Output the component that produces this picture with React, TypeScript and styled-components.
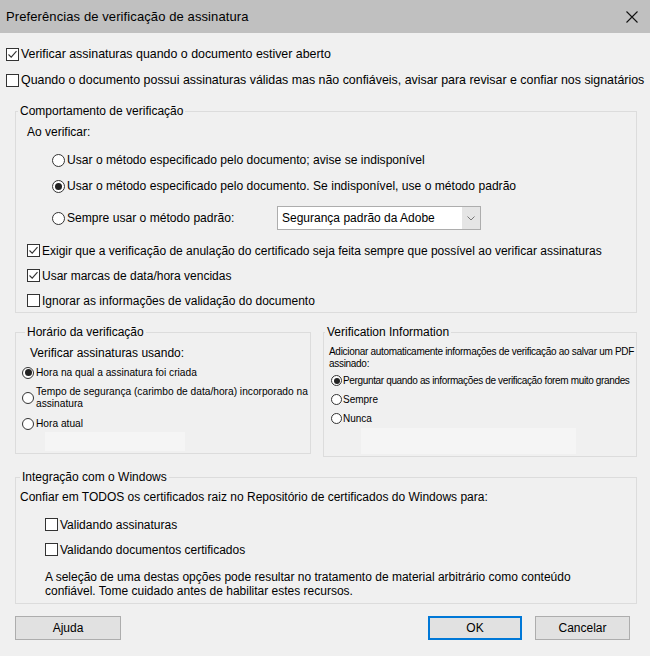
import React from "react";
import styled, { createGlobalStyle } from "styled-components";

const Global = createGlobalStyle`
  html, body { margin: 0; padding: 0; background: #f0f0f0; }
  body { font-family: "Liberation Sans", Arial, sans-serif; font-size: 12px; color: #000; }
  * { box-sizing: border-box; }
`;

const Window = styled.div`
  width: 650px;
  height: 656px;
  background: #f0f0f0;
  display: flex;
  flex-direction: column;
  overflow: hidden;
`;

const TitleBar = styled.div`
  height: 33px;
  flex: none;
  background: #c0c0c0;
  display: flex;
  align-items: center;
  justify-content: space-between;
  padding: 0 12px 0 6px;
`;

const Title = styled.div`
  font-size: 13px;
  letter-spacing: 0.1px;
`;

const CloseButton = styled.button`
  background: none;
  border: 0;
  padding: 0;
  width: 12px;
  height: 12px;
  display: flex;
`;

const TopOptions = styled.div`
  padding: 8px 0 0 6px;
  display: flex;
  flex-direction: column;
  flex: none;
`;

const Row = styled.label<{ $h?: number; $indent?: number; $mt?: number; $gap?: number }>`
  display: flex;
  align-items: center;
  gap: ${(p) => p.$gap ?? 2}px;
  height: ${(p) => p.$h ?? 26}px;
  margin-left: ${(p) => p.$indent ?? 0}px;
  margin-top: ${(p) => p.$mt ?? 0}px;
  white-space: nowrap;
  flex: none;
`;

const Text = styled.span<{ $size?: number; $lh?: number; $ls?: number }>`
  font-size: ${(p) => p.$size ?? 12}px;
  line-height: ${(p) => p.$lh ?? 14}px;
  letter-spacing: ${(p) => p.$ls ?? 0}px;
`;

const Box = styled.span`
  width: 13px;
  height: 13px;
  flex: none;
  border: 1px solid #333;
  background: #fff;
  display: flex;
  align-items: center;
  justify-content: center;
`;

const Circle = styled.span<{ $size: number }>`
  width: ${(p) => p.$size}px;
  height: ${(p) => p.$size}px;
  flex: none;
  border: 1px solid #333;
  border-radius: 50%;
  background: #fff;
  display: flex;
  align-items: center;
  justify-content: center;
`;

const Dot = styled.span<{ $size: number }>`
  width: ${(p) => p.$size}px;
  height: ${(p) => p.$size}px;
  border-radius: 50%;
  background: #222;
`;

const Check = ({ on }: { on?: boolean }) => (
  <Box>
    {on && (
      <svg width="11" height="11" viewBox="0 0 11 11">
        <path d="M1.5 5.5 L4.2 8.2 L9.5 2.2" fill="none" stroke="#333" strokeWidth="1.1" />
      </svg>
    )}
  </Box>
);

const Radio = ({ on, size = 13 }: { on?: boolean; size?: number }) => (
  <Circle $size={size}>{on && <Dot $size={Math.round(size * 0.55)} />}</Circle>
);

const Group = styled.fieldset<{ $h: number; $w?: number }>`
  margin: 0;
  padding: 0;
  min-width: 0;
  border: 1px solid #dcdcdc;
  display: flex;
  flex-direction: column;
  height: ${(p) => p.$h}px;
  flex: ${(p) => (p.$w ? `0 0 ${p.$w}px` : "1 1 0")};
`;

const Legend = styled.legend<{ $ml: number; $size?: number }>`
  padding: 0 2px;
  margin-left: ${(p) => p.$ml}px;
  font-size: ${(p) => p.$size ?? 12}px;
  line-height: 14px;
`;

const Section = styled.div<{ $mt: number }>`
  display: flex;
  gap: 12px;
  align-items: flex-start;
  flex: none;
  margin: ${(p) => p.$mt}px 13px 0 15px;
`;

const Caption = styled.div<{ $indent: number; $h?: number; $size?: number; $mt?: number }>`
  margin-left: ${(p) => p.$indent}px;
  margin-top: ${(p) => p.$mt ?? 0}px;
  height: ${(p) => (p.$h ? `${p.$h}px` : "auto")};
  display: flex;
  align-items: center;
  font-size: ${(p) => p.$size ?? 12}px;
  white-space: nowrap;
  flex: none;
`;

const MethodRow = styled.div`
  display: grid;
  grid-template-columns: 225px 204px;
  align-items: center;
  height: 26px;
  margin: 6px 0 0 36px;
  flex: none;
`;

const Select = styled.div`
  height: 24px;
  border: 1px solid #adadad;
  background: #fff;
  display: flex;
  align-items: stretch;
`;

const SelectValue = styled.span`
  flex: 1;
  display: flex;
  align-items: center;
  padding-left: 4px;
  font-size: 12px;
`;

const SelectArrow = styled.span`
  width: 18px;
  background: #e5e5e5;
  display: flex;
  align-items: center;
  justify-content: center;
`;

const SmallStack = styled.div<{ $gap: number; $indent: number; $mt?: number }>`
  display: flex;
  flex-direction: column;
  gap: ${(p) => p.$gap}px;
  margin-left: ${(p) => p.$indent}px;
  margin-top: ${(p) => p.$mt ?? 0}px;
  flex: none;
`;

const SmallRow = styled.label<{ $h?: number; $gap?: number }>`
  display: flex;
  align-items: center;
  gap: ${(p) => p.$gap ?? 2}px;
  min-height: ${(p) => p.$h ?? 13}px;
  white-space: nowrap;
`;

const Lines = styled.span<{ $size: number; $lh: number; $ls?: number }>`
  font-size: ${(p) => p.$size}px;
  line-height: ${(p) => p.$lh}px;
  letter-spacing: ${(p) => p.$ls ?? 0}px;
  white-space: nowrap;
`;

const Smudge = styled.div<{ $indent: number; $w: number; $h: number; $mt?: number }>`
  margin-left: ${(p) => p.$indent}px;
  margin-top: ${(p) => p.$mt ?? 0}px;
  width: ${(p) => p.$w}px;
  height: ${(p) => p.$h}px;
  background: #f5f5f5;
  flex: none;
`;

const Paragraph = styled.p`
  margin: 8px 0 0 29px;
  font-size: 12px;
  line-height: 14px;
  white-space: nowrap;
`;

const Footer = styled.div`
  display: flex;
  align-items: center;
  flex: none;
  margin: 12px 20px 0 15px;
`;

const Spacer = styled.div`
  flex: 1;
`;

const Button = styled.button<{ $w: number; $primary?: boolean }>`
  width: ${(p) => p.$w}px;
  height: 24px;
  background: #e1e1e1;
  border: ${(p) => (p.$primary ? "2px solid #0078d7" : "1px solid #adadad")};
  font-family: "Liberation Sans", Arial, sans-serif;
  font-size: 12px;
  color: #000;
  padding: 0;
`;

const ButtonGroup = styled.div`
  display: flex;
  gap: 13px;
`;

export default function App() {
  return (
    <Window>
      <Global />
      <TitleBar>
        <Title>Preferências de verificação de assinatura</Title>
        <CloseButton aria-label="Fechar">
          <svg width="12" height="12" viewBox="0 0 12 12">
            <path d="M0.5 0.5 L11.5 11.5 M11.5 0.5 L0.5 11.5" stroke="#111" strokeWidth="1.1" />
          </svg>
        </CloseButton>
      </TitleBar>

      <TopOptions>
        <Row>
          <Check on />
          <Text $size={12.4}>Verificar assinaturas quando o documento estiver aberto</Text>
        </Row>
        <Row>
          <Check />
          <Text $size={12.4}>
            Quando o documento possui assinaturas válidas mas não confiáveis, avisar para revisar e confiar nos signatários
          </Text>
        </Row>
      </TopOptions>

      <Section $mt={11}>
        <Group $h={209}>
          <Legend $ml={2}>Comportamento de verificação</Legend>
          <Caption $indent={11} $h={27}>Ao verificar:</Caption>
          <Row $indent={36} $mt={2}>
            <Radio />
            <Text $size={12.1}>Usar o método especificado pelo documento; avise se indisponível</Text>
          </Row>
          <Row $indent={36}>
            <Radio on />
            <Text $size={12.1}>Usar o método especificado pelo documento. Se indisponível, use o método padrão</Text>
          </Row>
          <MethodRow>
            <Row>
              <Radio />
              <Text $size={12.1}>Sempre usar o método padrão:</Text>
            </Row>
            <Select>
              <SelectValue>Segurança padrão da Adobe</SelectValue>
              <SelectArrow>
                <svg width="8" height="5" viewBox="0 0 8 5">
                  <path d="M0.5 0.5 L4 4 L7.5 0.5" fill="none" stroke="#777" strokeWidth="1" />
                </svg>
              </SelectArrow>
            </Select>
          </MethodRow>
          <Row $indent={11} $mt={7} $h={25}>
            <Check on />
            <Text>Exigir que a verificação de anulação do certificado seja feita sempre que possível ao verificar assinaturas</Text>
          </Row>
          <Row $indent={11} $h={25}>
            <Check on />
            <Text>Usar marcas de data/hora vencidas</Text>
          </Row>
          <Row $indent={11} $h={25}>
            <Check />
            <Text>Ignorar as informações de validação do documento</Text>
          </Row>
        </Group>
      </Section>

      <Section $mt={12}>
        <Group $w={296} $h={129}>
          <Legend $ml={9}>Horário da verificação</Legend>
          <Caption $indent={14} $h={27} $size={12}>Verificar assinaturas usando:</Caption>
          <SmallStack $gap={7} $indent={6}>
            <SmallRow>
              <Radio on size={12} />
              <Text $size={10.2} $lh={12}>Hora na qual a assinatura foi criada</Text>
            </SmallRow>
            <SmallRow $h={24}>
              <Radio size={12} />
              <Lines $size={10.2} $lh={12}>
                Tempo de segurança (carimbo de data/hora) incorporado na
                <br />
                assinatura
              </Lines>
            </SmallRow>
            <SmallRow>
              <Radio size={12} />
              <Text $size={10.2} $lh={12}>Hora atual</Text>
            </SmallRow>
          </SmallStack>
          <Smudge $indent={29} $w={140} $h={19} $mt={2} />
        </Group>

        <Group $h={132}>
          <Legend $ml={1}>Verification Information</Legend>
          <Caption $indent={5} $mt={7}>
            <Lines $size={10} $lh={12} $ls={-0.3}>
              Adicionar automaticamente informações de verificação ao salvar um PDF
              <br />
              assinado:
            </Lines>
          </Caption>
          <SmallStack $gap={0} $indent={7} $mt={1}>
            <SmallRow $h={19} $gap={1}>
              <Radio on size={11} />
              <Text $size={10} $lh={12} $ls={-0.35}>
                Perguntar quando as informações de verificação forem muito grandes
              </Text>
            </SmallRow>
            <SmallRow $h={19} $gap={1}>
              <Radio size={11} />
              <Text $size={10} $lh={12}>Sempre</Text>
            </SmallRow>
            <SmallRow $h={19} $gap={1}>
              <Radio size={11} />
              <Text $size={10} $lh={12}>Nunca</Text>
            </SmallRow>
          </SmallStack>
          <Smudge $indent={37} $w={215} $h={26} />
        </Group>
      </Section>

      <Section $mt={13}>
        <Group $h={134}>
          <Legend $ml={4}>Integração com o Windows</Legend>
          <Caption $indent={4} $h={26}>
            Confiar em TODOS os certificados raiz no Repositório de certificados do Windows para:
          </Caption>
          <Row $indent={29} $mt={2} $h={25}>
            <Check />
            <Text>Validando assinaturas</Text>
          </Row>
          <Row $indent={29} $h={25}>
            <Check />
            <Text>Validando documentos certificados</Text>
          </Row>
          <Paragraph>
            A seleção de uma destas opções pode resultar no tratamento de material arbitrário como conteúdo
            <br />
            confiável. Tome cuidado antes de habilitar estes recursos.
          </Paragraph>
        </Group>
      </Section>

      <Footer>
        <Button $w={106}>Ajuda</Button>
        <Spacer />
        <ButtonGroup>
          <Button $w={94} $primary>
            OK
          </Button>
          <Button $w={95}>Cancelar</Button>
        </ButtonGroup>
      </Footer>
    </Window>
  );
}
